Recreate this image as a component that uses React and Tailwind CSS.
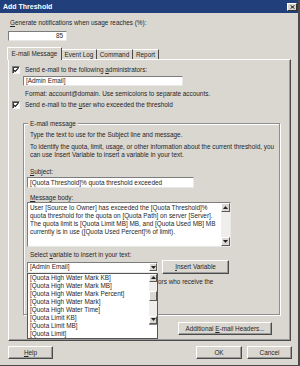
import React from "react";

const Check = () => (
  <div className="w-[8px] h-[8px] bg-white border border-t-[#7a7a7a] border-l-[#7a7a7a] border-r-[#f4f4f4] border-b-[#f4f4f4] shadow-[inset_1px_1px_0_#404040] flex items-center justify-center shrink-0">
    <svg width="6" height="6" viewBox="0 0 6 6">
      <path d="M0.6 2.8 L2.2 4.4 L5.4 1.2" fill="none" stroke="#111" strokeWidth="1.1" />
    </svg>
  </div>
);

const Arrow = ({ up }) => (
  <svg width="5" height="3" viewBox="0 0 5 3">
    <polygon points={up ? "0,3 5,3 2.5,0" : "0,0 5,0 2.5,3"} fill="#222" />
  </svg>
);

const ScrollBtn = ({ up, size = "w-[8px] h-[8px]" }) => (
  <div className={`${size} bg-[#dad7d1] border border-t-white border-l-white border-r-[#5a5a5a] border-b-[#5a5a5a] flex items-center justify-center shrink-0`}>
    <Arrow up={up} />
  </div>
);

const Btn = ({ children, className = "" }) => (
  <div className={`h-[13px] bg-[#dad7d1] border border-t-white border-l-white border-r-[#4a4a4a] border-b-[#4a4a4a] shadow-[inset_-1px_-1px_0_#9a9a9a] flex items-center justify-center whitespace-nowrap ${className}`}>
    {children}
  </div>
);

const field = "bg-white border border-t-[#7c7c7c] border-l-[#7c7c7c] border-r-[#e8e8e8] border-b-[#e8e8e8]";

export default function App() {
  const items = [
    "[Quota High Water Mark KB]",
    "[Quota High Water Mark MB]",
    "[Quota High Water Mark Percent]",
    "[Quota High Water Mark]",
    "[Quota High Water Time]",
    "[Quota Limit KB]",
    "[Quota Limit MB]",
    "[Quota Limit]",
  ];
  return (
    <div className="w-[300px] h-[366px] bg-[#dad7d1] font-['Liberation_Sans',Arial,sans-serif] text-[6.4px] leading-[8px] text-[#262626] flex flex-col border-r-2 border-b border-r-[#4a4a4a] border-b-[#4a4a4a] overflow-hidden">
      {/* Title bar */}
      <div className="h-[13px] bg-[#213f7a] flex items-center justify-between pl-[3px] pr-[1px] shrink-0">
        <span className="text-white font-bold text-[7px] leading-[8px]">Add Threshold</span>
        <div className="w-[10px] h-[8px] mt-[1px] bg-[#dad7d1] border border-t-white border-l-white border-r-[#333] border-b-[#333] flex items-center justify-center">
          <svg width="5" height="4" viewBox="0 0 5 4">
            <path d="M0.5 0.3 L4.5 3.7 M4.5 0.3 L0.5 3.7" stroke="#111" strokeWidth="1" />
          </svg>
        </div>
      </div>

      <div className="flex flex-col pl-[8px] pr-[6px]">
        <div className="mt-[6px] h-[8px] ml-[2px] whitespace-nowrap">
          <span className="underline">G</span>enerate notifications when usage reaches (%):
        </div>
        <div className={`mt-[4px] h-[10px] w-[59px] ${field} text-right pr-[3px] leading-[8px]`}>85</div>

        {/* Tabs */}
        <div className="mt-[6px] h-[12px] flex items-end relative z-10">
          <div className="-ml-[1px] w-[55px] h-[13px] -mb-[1px] bg-[#dad7d1] border-t border-l border-t-white border-l-white border-r border-r-[#4a4a4a] flex items-center justify-center rounded-t-[1px] whitespace-nowrap">
            E-mail Message
          </div>
          <div className="w-[35px] h-[10px] border-t border-t-white border-r border-r-[#4a4a4a] flex items-center justify-center whitespace-nowrap">
            Event Log
          </div>
          <div className="w-[36px] h-[10px] border-t border-t-white border-r border-r-[#4a4a4a] flex items-center justify-center whitespace-nowrap">
            Command
          </div>
          <div className="w-[26px] h-[10px] border-t border-t-white border-r border-r-[#4a4a4a] flex items-center justify-center whitespace-nowrap">
            Report
          </div>
        </div>

        {/* Tab panel */}
        <div className="w-[283px] h-[282px] border border-t-white border-l-white border-r-[#4a4a4a] border-b-[#4a4a4a] shadow-[inset_-1px_-1px_0_#9a9a9a] flex flex-col">
          <div className="mt-[6px] h-[8px] flex items-center ml-[3px] whitespace-nowrap">
            <Check />
            <span className="ml-[5px]">
              Send e-mail to the following <span className="underline">a</span>dministrators:
            </span>
          </div>
          <div className={`mt-[2px] ml-[14px] w-[160px] h-[10px] ${field} pl-[2px] leading-[8px]`}>[Admin Email]</div>
          <div className="mt-[4px] h-[8px] ml-[16px] whitespace-nowrap">
            Format: account@domain. Use semicolons to separate accounts.
          </div>
          <div className="mt-[3px] h-[8px] flex items-center ml-[3px] whitespace-nowrap">
            <Check />
            <span className="ml-[5px]">
              Send e-mail to the <span className="underline">u</span>ser who exceeded the threshold
            </span>
          </div>

          {/* Group box */}
          <div className="mt-[14px] ml-[14px] w-[257px] h-[192px] border border-[#8e8e8e] shadow-[1px_1px_0_#fff,inset_1px_1px_0_#fff] relative flex flex-col">
            <div className="absolute -top-[4px] left-[4px] px-[2px] h-[8px] bg-[#dad7d1] whitespace-nowrap">E-mail message</div>
            <div className="mt-[7px] h-[8px] ml-[6px] whitespace-nowrap">
              Type the text to use for the Subject line and message.
            </div>
            <div className="mt-[4px] ml-[6px] whitespace-nowrap">
              To identify the quota, limit, usage, or other information about the current threshold, you
              <br />
              can use Insert Variable to insert a variable in your text.
            </div>
            <div className="mt-[9px] h-[8px] ml-[6px] whitespace-nowrap">
              <span className="underline">S</span>ubject:
            </div>
            <div className={`mt-[1px] ml-[3px] w-[167px] h-[11px] ${field} pl-[2px] leading-[9px] whitespace-nowrap overflow-hidden`}>
              [Quota Threshold]% quota threshold exceeded
            </div>
            <div className="mt-[6px] h-[8px] ml-[6px] whitespace-nowrap">
              <span className="underline">M</span>essage body:
            </div>
            <div className={`ml-[3px] w-[204px] h-[45px] ${field} flex`}>
              <div className="flex-1 pl-[2px] pt-[1px] whitespace-nowrap overflow-hidden">
                User [Source Io Owner] has exceeded the [Quota Threshold]%
                <br />
                quota threshold for the quota on [Quota Path] on server [Server].
                <br />
                The quota limit is [Quota Limit MB] MB, and [Quota Used MB] MB
                <br />
                currently is in use ([Quota Used Percent]% of limit).
              </div>
              <div className="w-[9px] flex flex-col bg-[#efeeec]">
                <ScrollBtn up size="w-[9px] h-[9px]" />
                <div className="flex-1" />
                <ScrollBtn size="w-[9px] h-[9px]" />
              </div>
            </div>
            <div className="mt-[4px] h-[8px] ml-[6px] whitespace-nowrap">
              Select <span className="underline">v</span>ariable to insert in your text:
            </div>
            <div className="mt-[1px] h-[14px] flex items-center">
              <div className={`ml-[3px] w-[131px] h-[11px] ${field} relative flex items-center`}>
                <span className="flex-1 pl-[2px]">[Admin Email]</span>
                <ScrollBtn />
                {/* open dropdown list */}
                <div className="absolute top-[10px] -left-[1px] w-[131px] h-[66px] bg-white border border-[#555] flex z-20">
                  <div className="flex-1 flex flex-col pl-[2px]">
                    {items.map((t) => (
                      <div key={t} className="h-[8px] leading-[8px] whitespace-nowrap">
                        {t}
                      </div>
                    ))}
                  </div>
                  <div className="w-[8px] h-[51px] flex flex-col bg-[#efeeec] border-b border-b-[#888]">
                    <ScrollBtn up />
                    <div className="h-[9px]" />
                    <div className="w-[8px] h-[10px] bg-[#dad7d1] border border-t-white border-l-white border-r-[#5a5a5a] border-b-[#5a5a5a]" />
                    <div className="flex-1" />
                    <ScrollBtn />
                  </div>
                </div>
              </div>
              <Btn className="ml-[4px] w-[67px] h-[14px]">
                <span>
                  <span className="underline">I</span>nsert Variable
                </span>
              </Btn>
            </div>
            <div className="mt-[4px] h-[8px] ml-[134px] whitespace-nowrap">ors who receive the</div>
          </div>

          <Btn className="mt-[7px] ml-[169px] w-[94px]">
            <span>
              Additional <span className="underline">E</span>-mail Headers...
            </span>
          </Btn>
        </div>

        {/* Bottom buttons */}
        <div className="mt-[5px] flex">
          <Btn className="w-[45px]">
            <span>
              <span className="underline">H</span>elp
            </span>
          </Btn>
          <Btn className="ml-auto w-[46px]">OK</Btn>
          <Btn className="ml-[5px] w-[45px]">Cancel</Btn>
        </div>
      </div>
    </div>
  );
}
